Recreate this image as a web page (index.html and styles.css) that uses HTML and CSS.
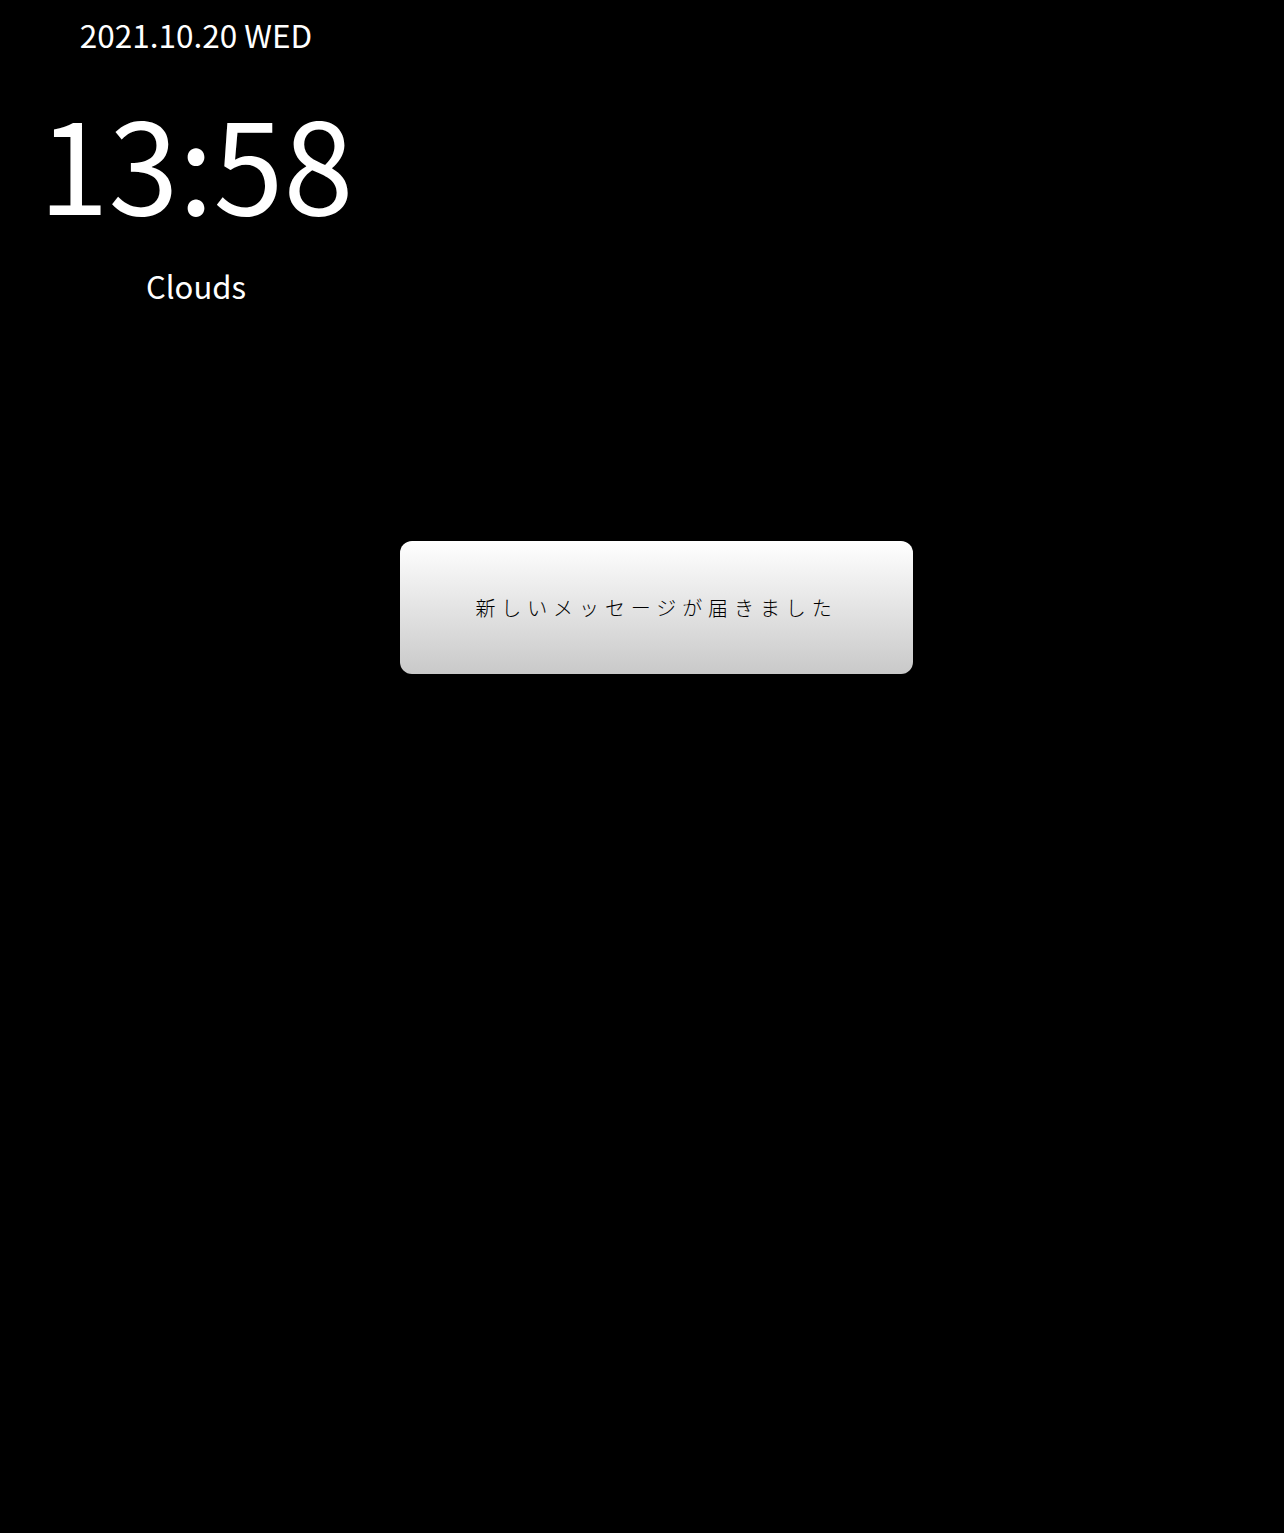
FILE: index.html
```html
<!DOCTYPE html>
<html lang="ja">
<head>
<meta charset="utf-8">
<link rel="stylesheet" href="styles.css">
</head>
<body>
<div class="screen">
  <section class="clock">
    <div class="date">2021.10.20 WED</div>
    <div class="time">13:58</div>
    <div class="weather">Clouds</div>
  </section>
  <div class="notice">新しいメッセージが届きました</div>
</div>
</body>
</html>
```
FILE: styles.css
```css
html, body {
  margin: 0;
  padding: 0;
  background: #000;
}
.screen {
  width: 1284px;
  height: 1533px;
  background: #000;
  color: #fff;
  font-family: "Noto Sans CJK JP", "Noto Sans", sans-serif;
  overflow: hidden;
}
.clock {
  width: 392px;
  text-align: center;
  padding-top: 14px;
}
.date {
  font-size: 31.5px;
  line-height: 40px;
}
.time {
  font-size: 126px;
  line-height: 150px;
  margin-top: 31px;
}
.weather {
  font-size: 31px;
  line-height: 40px;
  margin-top: 31px;
}
.notice {
  margin: 235px 0 0 400px;
  width: 513px;
  height: 133px;
  border-radius: 12px;
  background: linear-gradient(to bottom, #ffffff 0%, #c9c9c9 100%);
  color: #000;
  font-size: 20px;
  font-weight: 300;
  letter-spacing: 5.9px;
  display: flex;
  align-items: center;
  justify-content: center;
}
```
